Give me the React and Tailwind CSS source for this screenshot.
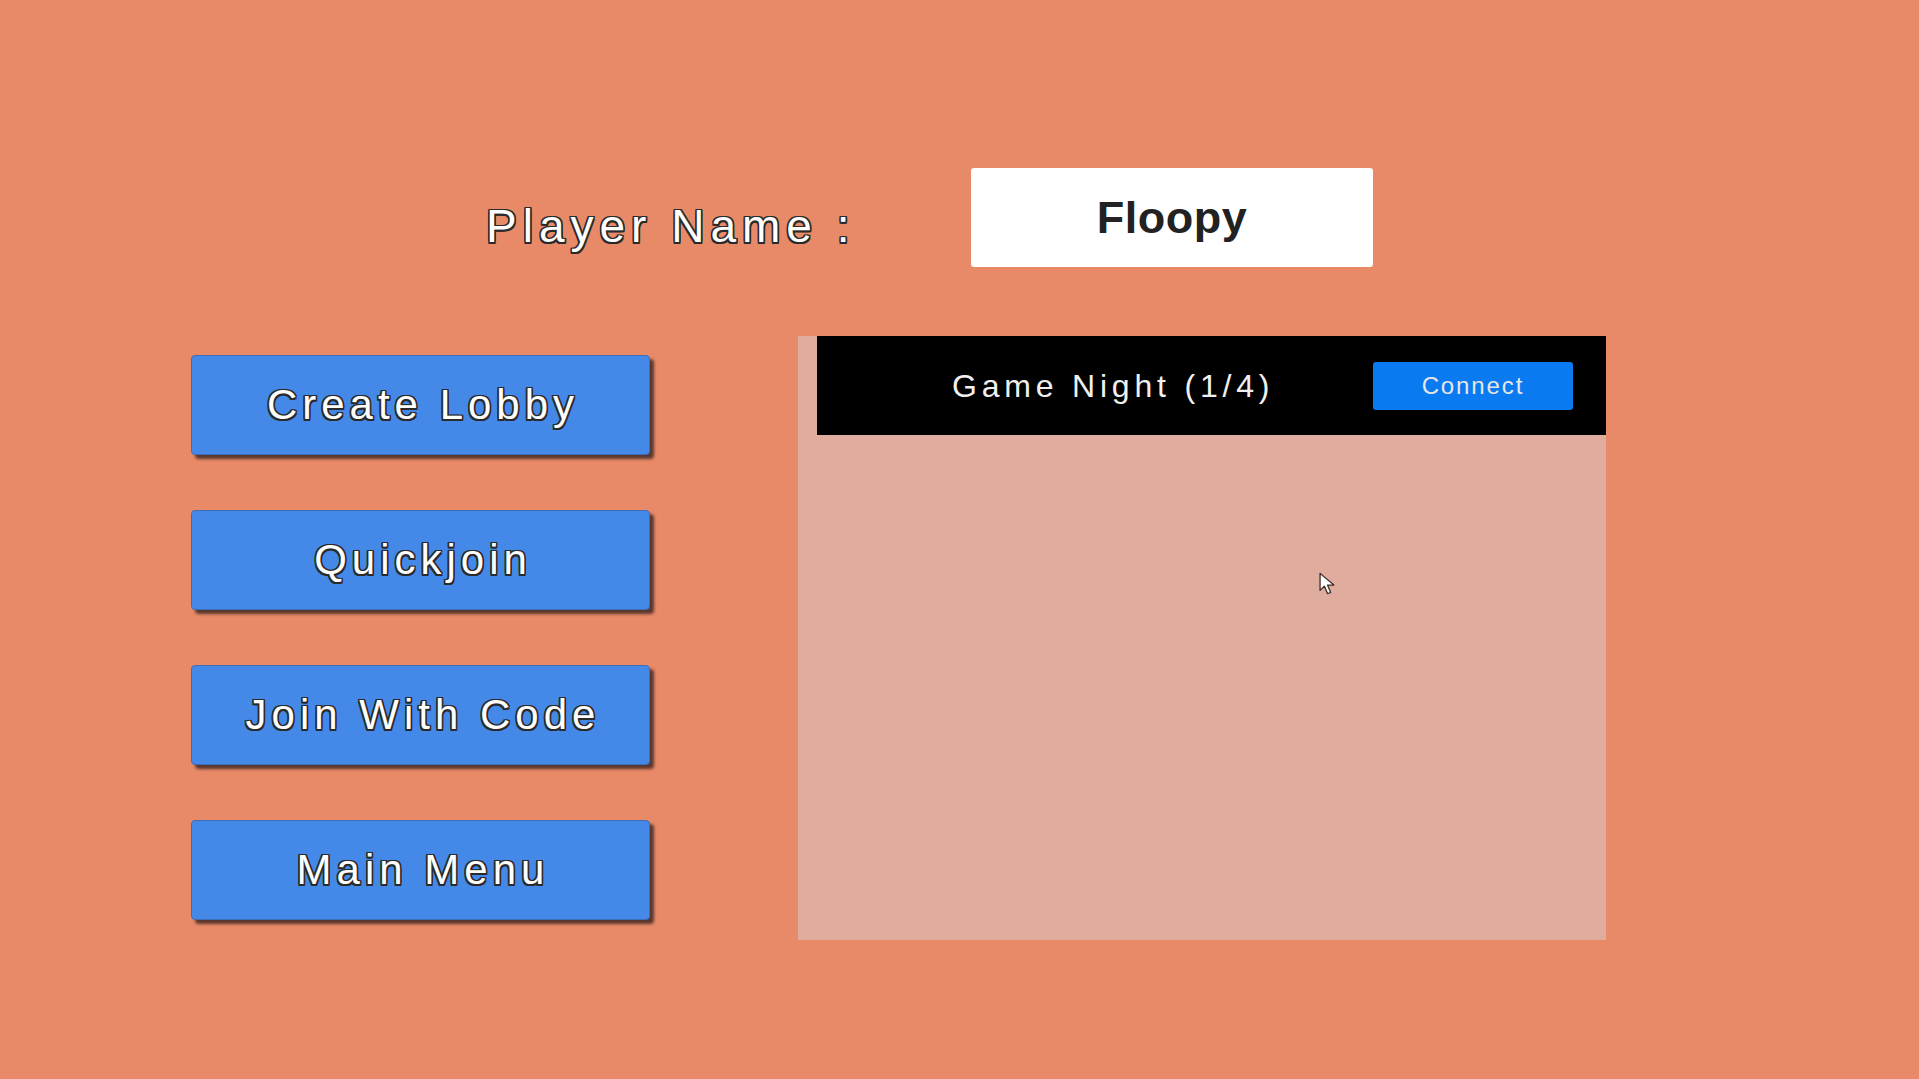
import React from 'react';

// Lobby browser screen: name field, action buttons and the open lobby list

const outline =
  '[text-shadow:-1.5px_-1.5px_0_#2a2a2a,1.5px_-1.5px_0_#2a2a2a,-1.5px_1.5px_0_#2a2a2a,1.5px_1.5px_0_#2a2a2a,0_1.5px_0_#2a2a2a,0_-1.5px_0_#2a2a2a,1.5px_0_0_#2a2a2a,-1.5px_0_0_#2a2a2a]';

function MenuButton({ label }) {
  return (
    <button
      className={`h-[100px] w-[459px] rounded-[4px] bg-[#4589e8] border border-[#3b6fb8] shadow-[4px_4px_3px_rgba(30,20,20,0.7)] flex items-center justify-center pl-[5px] text-[42px] leading-none tracking-[5px] text-white ${outline}`}
    >
      {label}
    </button>
  );
}

function LobbyRow({ name, players, maxPlayers }) {
  return (
    <div className="h-[99px] bg-black flex items-center">
      <div className="ml-[135px] w-[421px] text-[32px] leading-none tracking-[4.8px] text-[#f0f0f0] whitespace-nowrap">
        {name} ({players}/{maxPlayers})
      </div>
      <button className="h-[48px] w-[200px] rounded-[3px] bg-[#0a7af0] text-[24px] leading-none tracking-[1.9px] text-[#e6e6e6] flex items-center justify-center">
        Connect
      </button>
    </div>
  );
}

function Cursor() {
  return (
    <svg
      className="absolute left-[1319px] top-[572px]"
      width="17"
      height="24"
      viewBox="0 0 16 22"
    >
      <path
        d="M1 1 L1 17 L5 13 L8 20 L11 19 L8 12 L14 12 Z"
        fill="#ffffff"
        stroke="#3a2a2a"
        strokeWidth="1.2"
        strokeLinejoin="round"
      />
    </svg>
  );
}

export default function App() {
  const buttons = ['Create Lobby', 'Quickjoin', 'Join With Code', 'Main Menu'];
  const lobbies = [{ name: 'Game Night', players: 1, maxPlayers: 4 }];

  return (
    <div className="relative w-[1919px] h-[1079px] overflow-hidden bg-[#e88a68] font-['Liberation_Sans',Arial,sans-serif]">
      {/* Player name */}
      <div className="flex items-start pt-[168px]">
        <div
          className={`w-[971px] pl-[486px] pt-[35px] text-[46px] leading-none tracking-[6px] text-white whitespace-nowrap ${outline}`}
        >
          Player Name :
        </div>
        <div className="h-[99px] w-[402px] rounded-[3px] bg-white flex items-center justify-center">
          <span className="text-[45px] font-bold leading-none tracking-[0.5px] text-[#222222]">
            Floopy
          </span>
        </div>
      </div>

      {/* Actions + lobby list */}
      <div className="flex items-start mt-[69px]">
        <div className="flex flex-col gap-[55px] pl-[191px] pt-[19px]">
          {buttons.map((b) => (
            <MenuButton key={b} label={b} />
          ))}
        </div>

        <div className="ml-[148px] h-[604px] w-[808px] bg-[#e0ac9e] pl-[19px]">
          {lobbies.map((l) => (
            <LobbyRow key={l.name} {...l} />
          ))}
        </div>
      </div>

      <Cursor />
    </div>
  );
}
